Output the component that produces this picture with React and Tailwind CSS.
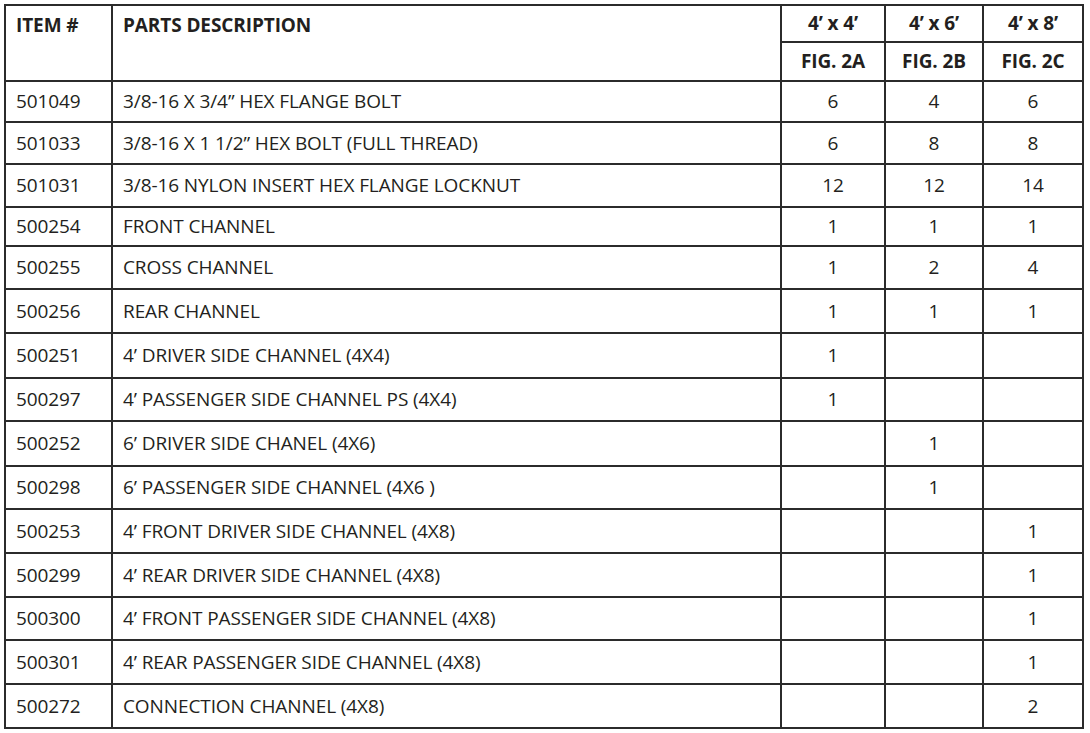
import React from 'react'

const rows = [
  ['501049', '3/8-16 X 3/4” HEX FLANGE BOLT', '6', '4', '6', 41],
  ['501033', '3/8-16 X 1 1/2” HEX BOLT (FULL THREAD)', '6', '8', '8', 42],
  ['501031', '3/8-16 NYLON INSERT HEX FLANGE LOCKNUT', '12', '12', '14', 43],
  ['500254', 'FRONT CHANNEL', '1', '1', '1', 39],
  ['500255', 'CROSS CHANNEL', '1', '2', '4', 43],
  ['500256', 'REAR CHANNEL', '1', '1', '1', 44],
  ['500251', '4’ DRIVER SIDE CHANNEL (4X4)', '1', '', '', 45],
  ['500297', '4’ PASSENGER SIDE CHANNEL PS (4X4)', '1', '', '', 43],
  ['500252', '6’ DRIVER SIDE CHANEL (4X6)', '', '1', '', 45],
  ['500298', '6’ PASSENGER SIDE CHANNEL (4X6 )', '', '1', '', 43],
  ['500253', '4’ FRONT DRIVER SIDE CHANNEL (4X8)', '', '', '1', 44],
  ['500299', '4’ REAR DRIVER SIDE CHANNEL (4X8)', '', '', '1', 44],
  ['500300', '4’ FRONT PASSENGER SIDE CHANNEL (4X8)', '', '', '1', 43],
  ['500301', '4’ REAR PASSENGER SIDE CHANNEL (4X8)', '', '', '1', 44],
  ['500272', 'CONNECTION CHANNEL (4X8)', '', '', '2', 44],
]

const cell = 'border-2 border-[#2b2b2b] p-0'

export default function App() {
  return (
    <div className="min-h-screen bg-white pl-[4px] pt-[4px] text-[#231f20]" style={{ fontFamily: '"Open Sans", "Liberation Sans", sans-serif' }}>
      <table className="border-collapse table-fixed w-[1080px] text-[19px] tracking-[-0.1px]">
        <colgroup>
          <col className="w-[107px]" />
          <col className="w-[669px]" />
          <col className="w-[104px]" />
          <col className="w-[98px]" />
          <col className="w-[100px]" />
        </colgroup>
        <thead>
          <tr className="h-[37px]">
            <th rowSpan={2} className={`${cell} text-left align-top font-bold pl-[10px] pt-[5px]`}>ITEM #</th>
            <th rowSpan={2} className={`${cell} text-left align-top font-bold pl-[10px] pt-[5px]`}>PARTS DESCRIPTION</th>
            <th className={`${cell} text-center font-bold`}>4’ x 4’</th>
            <th className={`${cell} text-center font-bold`}>4’ x 6’</th>
            <th className={`${cell} text-center font-bold`}>4’ x 8’</th>
          </tr>
          <tr className="h-[39px]">
            <th className={`${cell} text-center font-bold`}>FIG. 2A</th>
            <th className={`${cell} text-center font-bold`}>FIG. 2B</th>
            <th className={`${cell} text-center font-bold`}>FIG. 2C</th>
          </tr>
        </thead>
        <tbody>
          {rows.map(([item, desc, a, b, c, h]) => (
            <tr key={item} style={{ height: h }}>
              <td className={`${cell} pl-[10px]`}>{item}</td>
              <td className={`${cell} pl-[10px]`}>{desc}</td>
              <td className={`${cell} text-center`}>{a}</td>
              <td className={`${cell} text-center`}>{b}</td>
              <td className={`${cell} text-center`}>{c}</td>
            </tr>
          ))}
        </tbody>
      </table>
    </div>
  )
}
